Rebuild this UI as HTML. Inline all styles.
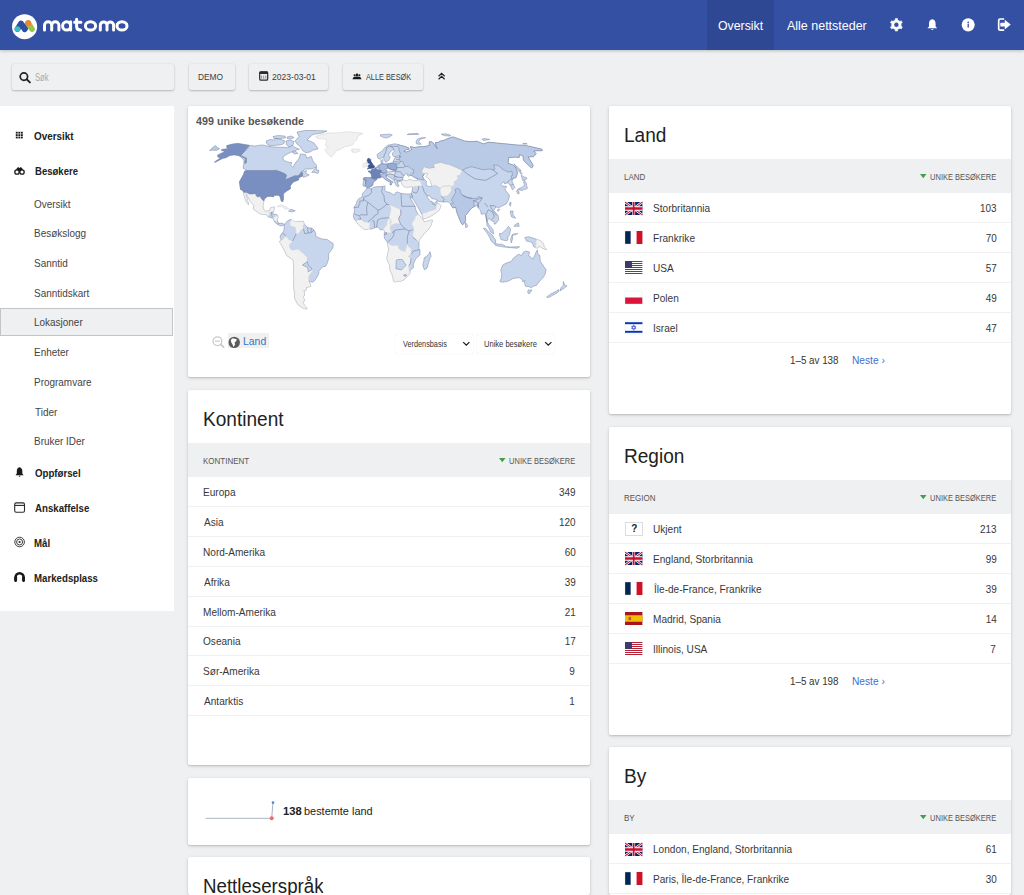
<!DOCTYPE html><html><head><meta charset="utf-8"><title>Matomo</title><style>
html{margin:0;padding:0;width:1024px;height:895px;overflow:hidden;}
body{margin:0;padding:0;}
body{width:1024px;height:895px;overflow:hidden;position:relative;background:#eff0f1;font-family:"Liberation Sans", sans-serif;}
.t{position:absolute;white-space:nowrap;}
.r{position:absolute;box-sizing:border-box;}
svg{position:absolute;overflow:visible;}
.card{position:absolute;background:#fff;border-radius:2px;box-shadow:0 1px 2px rgba(0,0,0,.16),0 1px 4px rgba(0,0,0,.10);}
.btn{position:absolute;background:#eff0f1;border-radius:2px;box-shadow:0 1px 2px rgba(0,0,0,.22),0 0 2px rgba(0,0,0,.08);}
</style></head><body>
<div class="r" style="left:0px;top:0px;width:1024px;height:50px;background:#3450a3;box-shadow:0 1px 3px rgba(0,0,0,.22);"></div>
<div class="r" style="left:707px;top:0px;width:67px;height:50px;background:#2f4893;"></div>
<div class="t" style="top:19.31px;font-size:13.1px;line-height:13.1px;color:#fff;transform:scaleX(0.940);left:717.92px;transform-origin:0 0;">Oversikt</div>
<div class="t" style="top:19.31px;font-size:13.1px;line-height:13.1px;color:#fff;transform:scaleX(0.953);left:786.98px;transform-origin:0 0;">Alle nettsteder</div>
<svg style="left:0;top:0" width="140" height="50">
<circle cx="24.6" cy="26.7" r="12.55" fill="#fff"/>
<path d="M17.5 29L21.1 23.4L24.7 29.3L28.2 23.3" fill="none" stroke="#2f4e9f" stroke-width="5.7" stroke-linecap="round" stroke-linejoin="round"/>
<path d="M28.2 23.3L31.9 29" fill="none" stroke="#95c748" stroke-width="5.8" stroke-linecap="round"/>
<circle cx="17.45" cy="29" r="2.85" fill="#35bfc0"/>
<circle cx="28.2" cy="23.25" r="2.9" fill="#f38334"/>
<g fill="none" stroke="#fff" stroke-width="3.0" stroke-linecap="round" stroke-linejoin="round">
<path d="M44.5 30.1V25.3A3.6 3.6 0 0 1 51.7 25.3V30.1M51.7 25.3A3.6 3.6 0 0 1 58.9 25.3V30.1"/>
<ellipse cx="66.6" cy="25.9" rx="4.0" ry="4.2"/><path d="M70.6 21.8V30.1"/>
<path d="M76.6 19.3V26.6Q76.6 30.1 80.6 30.1M74.6 22.2H80.9"/>
<ellipse cx="90.5" cy="25.9" rx="5.1" ry="4.2"/>
<path d="M100.3 30.1V25.3A3.35 3.35 0 0 1 107 25.3V30.1M107 25.3A3.3 3.3 0 0 1 113.6 25.3V30.1"/>
<ellipse cx="122" cy="25.9" rx="5.0" ry="4.2"/>
</g></svg>
<svg style="left:0;top:0" width="1024" height="50">
<path d="M895.31 20.02L895.27 18.60L897.53 18.60L897.49 20.02L899.99 21.46L901.20 20.72L902.33 22.68L901.08 23.36L901.08 26.24L902.33 26.92L901.20 28.88L899.99 28.14L897.49 29.58L897.53 31.00L895.27 31.00L895.31 29.58L892.81 28.14L891.60 28.88L890.47 26.92L891.72 26.24L891.72 23.36L890.47 22.68L891.60 20.72L892.81 21.46Z M896.4 22.3A2.5 2.5 0 1 0 896.4 27.3A2.5 2.5 0 1 0 896.4 22.3Z" fill="#fff" fill-rule="evenodd" stroke="#fff" stroke-width="0.6" stroke-linejoin="round"/>
<path d="M932.3 19.2C934.8 19.6 935.6 21.4 935.6 24.2V26.6L937.2 28.3H927.4L929 26.6V24.2C929 21.4 929.8 19.6 932.3 19.2Z" fill="#fff"/>
<path d="M931.2 28.9H933.4A1.1 1.1 0 0 1 931.2 28.9Z" fill="#fff"/>
<circle cx="968.2" cy="24.85" r="6.55" fill="#fff"/>
<circle cx="968.2" cy="22.3" r="0.85" fill="#3450a3"/>
<rect x="967.55" y="23.7" width="1.3" height="3.9" fill="#3450a3"/>
<path d="M1004.2 19H1000.2Q998.7 19 998.7 20.5V28.7Q998.7 30.2 1000.2 30.2H1004.2" fill="none" stroke="#fff" stroke-width="1.7"/>
<path d="M1000.6 23H1005V20.3L1010.4 24.6L1005 28.9V26.2H1000.6Z" fill="#fff" stroke="#fff" stroke-width="0.5" stroke-linejoin="round"/>
</svg>
<div class="btn" style="left:12px;top:64px;width:162px;height:26px;"></div>
<div class="btn" style="left:189px;top:64px;width:46px;height:26px;"></div>
<div class="btn" style="left:249px;top:64px;width:79px;height:26px;"></div>
<div class="btn" style="left:343px;top:64px;width:80px;height:26px;"></div>
<div class="t" style="top:72.93px;font-size:10px;line-height:10px;color:#aaa;transform:scaleX(0.767);left:35.35px;transform-origin:0 0;">Søk</div>
<div class="t" style="top:71.87px;font-size:9.6px;line-height:9.6px;color:#3c3c3c;transform:scaleX(0.871);left:198.11px;transform-origin:0 0;">DEMO</div>
<div class="t" style="top:71.97px;font-size:9.6px;line-height:9.6px;color:#3c3c3c;transform:scaleX(0.893);left:272.27px;transform-origin:0 0;">2023-03-01</div>
<div class="t" style="top:71.97px;font-size:9.6px;line-height:9.6px;color:#3c3c3c;transform:scaleX(0.761);left:365.99px;transform-origin:0 0;">ALLE BESØK</div>
<svg style="left:0;top:0" width="460" height="100">
<circle cx="23.9" cy="76.6" r="3.7" fill="none" stroke="#222" stroke-width="1.7"/>
<path d="M26.6 79.3L29.9 82.4" stroke="#222" stroke-width="1.9" stroke-linecap="round"/>
<rect x="259.7" y="71.9" width="8" height="8.3" rx="1.3" fill="none" stroke="#2b2b2b" stroke-width="1.2"/>
<rect x="259.3" y="71.5" width="8.8" height="2.6" rx="1" fill="#2b2b2b"/>
<path d="M261.6 75.6V78.8M263.7 75.6V78.8M265.8 75.6V78.8" stroke="#777" stroke-width="0.8"/>
<circle cx="354.6" cy="75.2" r="1.05" fill="#1a1a1a"/><circle cx="357" cy="74.9" r="1.3" fill="#1a1a1a"/><circle cx="359.4" cy="75.2" r="1.05" fill="#1a1a1a"/>
<path d="M352.5 79.3Q352.8 76.7 354.6 76.7Q356 76.7 357 76.6Q358 76.7 359.4 76.7Q361.2 76.7 361.5 79.3Z" fill="#1a1a1a"/>
<path d="M438.6 76.3L441.6 73.4L444.6 76.3M438.6 79.3L441.6 76.4L444.6 79.3" fill="none" stroke="#222" stroke-width="1.2"/>
</svg>
<div class="r" style="left:0px;top:106px;width:174px;height:505px;background:#fff;"></div>
<div class="r" style="left:0px;top:308px;width:173px;height:28px;background:#eff0f1;border:1px solid #c4c4c4;"></div>
<div class="t" style="top:130.80px;font-size:10.75px;line-height:10.75px;color:#212121;font-weight:700;transform:scaleX(0.919);left:34.49px;transform-origin:0 0;">Oversikt</div>
<div class="t" style="top:165.90px;font-size:10.75px;line-height:10.75px;color:#212121;font-weight:700;transform:scaleX(0.888);left:34.56px;transform-origin:0 0;">Besøkere</div>
<div class="t" style="top:199.56px;font-size:10.2px;line-height:10.2px;color:#444;transform:scaleX(0.977);left:34.43px;transform-origin:0 0;">Oversikt</div>
<div class="t" style="top:229.28px;font-size:10.2px;line-height:10.2px;color:#444;transform:scaleX(0.977);left:34.08px;transform-origin:0 0;">Besøkslogg</div>
<div class="t" style="top:259.00px;font-size:10.2px;line-height:10.2px;color:#444;transform:scaleX(0.977);left:34.45px;transform-origin:0 0;">Sanntid</div>
<div class="t" style="top:288.72px;font-size:10.2px;line-height:10.2px;color:#444;transform:scaleX(0.977);left:34.45px;transform-origin:0 0;">Sanntidskart</div>
<div class="t" style="top:318.44px;font-size:10.2px;line-height:10.2px;color:#444;transform:scaleX(0.977);left:34.08px;transform-origin:0 0;">Lokasjoner</div>
<div class="t" style="top:348.16px;font-size:10.2px;line-height:10.2px;color:#444;transform:scaleX(0.977);left:34.08px;transform-origin:0 0;">Enheter</div>
<div class="t" style="top:377.88px;font-size:10.2px;line-height:10.2px;color:#444;transform:scaleX(0.977);left:34.08px;transform-origin:0 0;">Programvare</div>
<div class="t" style="top:407.60px;font-size:10.2px;line-height:10.2px;color:#444;transform:scaleX(0.977);left:34.68px;transform-origin:0 0;">Tider</div>
<div class="t" style="top:437.32px;font-size:10.2px;line-height:10.2px;color:#444;transform:scaleX(0.977);left:34.08px;transform-origin:0 0;">Bruker IDer</div>
<div class="t" style="top:467.50px;font-size:10.75px;line-height:10.75px;color:#212121;font-weight:700;transform:scaleX(0.900);left:34.50px;transform-origin:0 0;">Oppførsel</div>
<div class="t" style="top:502.60px;font-size:10.75px;line-height:10.75px;color:#212121;font-weight:700;transform:scaleX(0.900);left:34.66px;transform-origin:0 0;">Anskaffelse</div>
<div class="t" style="top:537.70px;font-size:10.75px;line-height:10.75px;color:#212121;font-weight:700;transform:scaleX(0.900);left:34.25px;transform-origin:0 0;">Mål</div>
<div class="t" style="top:572.90px;font-size:10.75px;line-height:10.75px;color:#212121;font-weight:700;transform:scaleX(0.900);left:34.25px;transform-origin:0 0;">Markedsplass</div>
<svg style="left:0;top:100" width="180" height="500" viewBox="0 100 180 500">
<rect x="15.80" y="131.80" width="1.9" height="1.8" fill="#1a1a1a"/><rect x="15.80" y="134.20" width="1.9" height="1.8" fill="#1a1a1a"/><rect x="15.80" y="136.60" width="1.9" height="1.8" fill="#1a1a1a"/><rect x="18.35" y="131.80" width="1.9" height="1.8" fill="#1a1a1a"/><rect x="18.35" y="134.20" width="1.9" height="1.8" fill="#1a1a1a"/><rect x="18.35" y="136.60" width="1.9" height="1.8" fill="#1a1a1a"/><rect x="20.90" y="131.80" width="1.9" height="1.8" fill="#1a1a1a"/><rect x="20.90" y="134.20" width="1.9" height="1.8" fill="#1a1a1a"/><rect x="20.90" y="136.60" width="1.9" height="1.8" fill="#1a1a1a"/>
<path d="M15.2 171.5L17 168Q17.5 167.2 18.8 167.3L19.5 168.2L20.2 167.3Q21.5 167.2 22 168L23.8 171.5Z" fill="#1a1a1a"/>
<circle cx="17" cy="172" r="2.2" fill="#fff" stroke="#1a1a1a" stroke-width="1.3"/>
<circle cx="22" cy="172" r="2.2" fill="#fff" stroke="#1a1a1a" stroke-width="1.3"/>
<path d="M19.5 467.2C21.6 467.6 22.3 469.2 22.3 471.2V473.6L23.6 475.3H15.5L16.8 473.6V471.2C16.8 469.2 17.4 467.6 19.5 467.2Z" fill="#1a1a1a"/>
<path d="M18.6 475.8H20.5A0.95 0.95 0 0 1 18.6 475.8Z" fill="#1a1a1a"/>
<rect x="14.7" y="502.9" width="9.8" height="9.3" rx="1.5" fill="none" stroke="#2a2a2a" stroke-width="1.1"/>
<path d="M14.9 505.4H24.4" stroke="#2a2a2a" stroke-width="1.1"/>
<circle cx="19.6" cy="542" r="4.8" fill="none" stroke="#2a2a2a" stroke-width="0.9"/>
<circle cx="19.6" cy="542" r="3" fill="none" stroke="#2a2a2a" stroke-width="0.9"/>
<circle cx="19.6" cy="542" r="1.1" fill="#2a2a2a"/>
<path d="M15.6 580.7V577.2A4 4 0 0 1 23.6 577.2V580.7" fill="none" stroke="#1a1a1a" stroke-width="2.6" stroke-linecap="round"/>
<rect x="14.3" y="576.6" width="2.8" height="4.6" rx="1" fill="#1a1a1a"/><rect x="22.1" y="576.6" width="2.8" height="4.6" rx="1" fill="#1a1a1a"/>
</svg>
<div class="card" style="left:188px;top:106px;width:402px;height:271px;"></div>
<div class="t" style="top:115.69px;font-size:11px;line-height:11px;color:#555;font-weight:700;transform:scaleX(0.976);left:196.14px;transform-origin:0 0;">499 unike besøkende</div>
<svg style="left:0;top:0" width="1024" height="895"><defs><clipPath id="mc"><rect x="188" y="106" width="402" height="271"/></clipPath></defs><g clip-path="url(#mc)"><path d="M251.0 145.3L254.4 146.1L261.6 144.9L265.4 145.5L270.4 146.7L277.8 147.2L283.9 147.2L287.9 147.8L291.7 144.9L293.9 146.7L296.5 148.0L299.4 149.2L292.7 151.3L284.5 155.5L282.9 157.9L283.6 160.4L287.7 161.9L291.8 162.7L290.9 165.5L292.7 167.3L295.4 162.9L299.0 158.5L300.4 153.9L305.6 154.5L306.8 158.1L311.3 156.4L312.9 161.0L316.1 164.8L316.7 166.8L311.8 169.0L305.7 169.0L300.6 172.4L306.8 170.7L305.5 173.1L309.2 175.0L306.3 176.3L303.4 177.3L302.6 176.0L298.9 177.6L298.4 180.0L293.7 181.7L291.5 183.9L290.1 186.3L290.4 188.7L287.3 190.6L283.3 193.6L283.3 199.6L282.5 202.0L281.2 200.7L280.6 198.3L279.6 195.6L276.9 195.1L273.5 195.4L273.6 196.8L271.1 196.3L267.7 196.3L264.2 199.0L263.9 201.0L262.8 206.3L264.0 210.0L265.6 211.4L269.7 210.7L270.7 207.6L274.6 207.0L273.6 211.0L272.4 214.3L276.2 214.3L278.0 215.6L277.3 221.0L279.0 223.6L281.9 223.0L284.4 224.3L283.0 225.6L280.7 225.9L277.8 224.6L274.8 222.3L273.0 218.3L268.5 217.0L265.9 214.2L263.0 214.7L259.1 213.2L253.3 209.0L254.1 205.6L250.2 201.2L247.6 196.3L245.9 193.2L246.1 195.6L248.8 205.0L246.3 202.3L245.0 198.3L244.0 195.0L243.6 192.3L242.7 190.3L240.6 189.5L240.0 185.7L239.5 181.8L243.7 174.2L244.6 171.3L246.8 170.5L243.1 168.2L243.8 163.5L243.9 160.4L242.1 157.9L239.7 156.3ZM311.7 172.4L316.4 167.2L316.2 169.9L318.7 170.1L318.6 172.4L317.4 173.7L315.1 172.4ZM288.6 211.0L290.5 209.1L295.3 210.8L292.4 211.9L288.5 211.2ZM284.4 224.3L285.9 223.0L287.4 221.0L291.1 219.1L291.2 221.2L295.2 221.6L299.8 221.4L303.3 221.4L304.3 224.3L307.7 227.6L312.3 228.3L314.0 230.0L315.7 233.2L315.7 236.3L318.0 237.4L322.1 239.0L327.3 239.5L330.7 242.0L332.8 243.0L333.3 245.2L332.6 248.3L330.3 251.6L328.7 253.6L328.6 259.0L327.3 263.0L325.8 266.3L323.0 266.7L318.8 271.0L318.8 273.6L317.1 277.0L314.4 281.0L312.8 282.2L310.0 281.6L308.8 281.0L310.4 284.3L310.8 286.3L306.2 287.6L306.4 289.9L303.5 290.3L304.5 292.3L304.3 295.6L302.8 297.5L304.9 299.5L303.2 302.4L304.1 305.0L307.3 308.4L306.1 309.1L302.7 307.8L297.9 304.6L294.6 298.2L294.6 292.9L293.7 287.6L294.0 278.3L293.4 273.0L293.7 266.3L293.2 260.0L286.9 255.6L285.0 251.6L281.5 245.0L279.6 241.9L281.1 239.0L279.9 237.0L281.0 234.3L282.4 233.2L284.0 230.3L284.1 227.0ZM363.4 186.3L362.9 183.9L363.8 180.7L363.2 178.4L364.6 177.5L368.8 177.8L371.2 177.8L371.8 176.3L370.7 172.9L368.0 171.3L371.3 170.9L371.6 169.6L374.5 169.0L375.4 167.8L376.9 167.3L377.7 165.4L379.8 164.8L381.5 164.1L381.2 162.2L380.7 160.6L382.8 159.5L383.0 161.4L382.7 163.1L383.7 164.1L386.7 164.1L391.1 163.1L393.4 162.6L393.2 161.0L395.0 157.6L401.1 156.8L398.1 156.1L393.9 156.7L392.7 155.5L392.3 153.1L395.1 150.7L394.0 149.7L392.3 150.1L390.0 152.5L388.8 154.3L388.6 155.5L390.2 156.7L389.8 157.9L388.7 160.4L386.9 161.6L385.6 162.4L384.9 161.0L383.7 158.5L382.6 157.3L380.4 159.1L379.4 159.1L377.7 157.9L377.3 156.1L377.2 154.3L379.9 152.5L382.5 150.8L384.0 148.6L385.5 147.0L387.8 145.2L391.1 144.6L394.2 143.8L397.0 144.2L398.9 144.7L400.8 145.5L403.6 146.1L408.5 147.8L409.2 149.2L406.4 149.5L403.8 151.3L406.3 152.1L408.8 151.1L411.8 149.5L410.3 146.7L414.6 147.5L418.6 146.8L423.8 146.7L429.3 145.5L429.3 142.2L429.4 141.7L432.0 141.9L433.8 143.9L437.4 148.9L436.5 146.7L435.1 142.8L438.9 142.2L439.7 141.2L443.4 140.6L447.7 138.6L452.8 136.9L465.2 141.2L471.6 141.7L476.7 141.2L483.4 143.9L488.9 142.2L498.8 143.3L507.5 144.1L518.5 145.2L523.7 145.2L528.6 146.2L541.9 149.2L542.3 150.7L536.9 150.7L533.7 151.0L536.2 153.7L534.7 155.5L533.4 156.7L528.0 156.9L529.4 159.1L531.0 161.6L533.2 165.4L531.6 168.0L528.7 165.4L524.1 161.0L523.4 159.4L523.2 156.1L519.6 154.5L519.1 157.5L515.4 157.1L508.7 157.5L508.4 160.4L508.2 163.5L512.7 164.8L515.1 166.7L517.3 171.2L517.1 174.4L515.9 177.7L512.7 178.6L512.0 181.3L514.9 187.6L512.9 189.6L512.1 189.4L510.7 185.7L507.6 182.9L504.5 183.7L504.1 181.7L501.2 183.7L500.8 184.6L502.7 186.1L506.7 186.3L505.0 189.0L506.4 191.6L508.8 194.3L509.5 195.9L508.3 200.3L506.2 203.9L502.0 206.0L498.9 207.6L496.0 207.0L494.5 209.0L493.8 210.6L498.0 215.2L498.8 219.6L495.5 224.0L494.3 224.2L494.0 221.6L491.8 221.0L489.1 218.8L488.1 217.8L487.6 222.3L489.0 225.0L490.4 226.6L492.9 229.6L493.8 233.8L490.4 231.9L489.1 228.3L486.7 225.0L486.9 222.3L485.1 213.6L481.3 214.3L480.5 210.3L478.3 208.0L477.4 205.6L474.3 206.6L472.2 207.6L470.2 209.6L467.1 213.6L465.3 215.6L465.6 218.3L465.2 221.9L462.7 224.8L461.2 223.0L459.3 218.6L457.1 213.0L456.3 209.9L455.8 207.2L452.9 207.9L451.6 205.8L450.5 204.2L448.3 201.8L442.8 202.0L437.9 201.2L436.4 199.4L431.6 198.6L429.7 195.9L426.9 195.6L427.6 197.6L429.6 200.3L431.4 201.9L431.4 201.0L434.4 203.4L436.8 200.6L437.2 203.2L439.5 204.2L441.1 205.6L439.2 210.3L436.2 212.6L433.1 214.8L429.0 217.0L425.1 218.6L423.2 218.8L422.4 215.6L418.9 209.0L417.6 206.6L415.1 202.3L412.5 198.3L412.3 196.3L411.3 193.9L411.9 191.6L412.5 189.0L412.7 186.8L410.8 186.6L408.2 187.2L406.5 187.0L404.0 186.7L402.8 185.3L401.5 183.0L401.6 181.7L401.2 181.3L398.9 181.3L398.4 182.3L397.4 181.7L398.1 185.0L399.2 185.0L397.8 187.1L396.1 185.3L394.9 183.0L393.8 180.0L390.0 177.7L387.5 175.9L385.9 175.2L386.3 177.1L388.0 179.0L390.2 180.4L393.0 182.2L391.5 183.7L391.1 185.0L390.2 185.0L390.4 182.3L388.1 181.0L386.2 180.1L384.2 178.4L382.0 176.5L380.5 177.6L378.4 178.0L376.3 178.4L376.5 179.8L373.7 181.7L372.8 183.0L373.2 184.1L372.4 185.5L370.8 186.7L367.1 187.6L366.2 186.6L365.0 186.1ZM366.8 187.9L371.0 188.8L374.3 187.0L378.6 186.6L382.6 186.5L384.1 185.9L385.2 186.2L384.7 187.6L385.3 188.7L384.5 190.3L386.0 191.5L387.6 191.9L390.2 192.7L394.5 195.2L395.5 192.7L397.6 191.9L401.0 193.4L406.5 194.0L409.2 193.9L411.3 193.9L412.3 196.3L411.8 198.3L410.2 196.3L409.7 195.8L411.0 199.6L413.5 203.6L415.6 207.6L415.7 209.5L418.0 214.3L421.0 217.2L423.1 219.8L424.0 221.8L426.3 221.5L429.7 220.6L432.3 219.9L432.1 221.8L430.5 226.3L428.2 229.6L424.2 233.6L421.9 236.7L419.8 239.0L418.8 241.9L419.0 245.0L418.9 249.0L420.0 250.3L419.9 255.0L415.6 259.0L413.3 264.3L413.5 267.6L410.3 270.2L409.7 273.6L407.9 275.6L404.2 279.6L401.4 281.0L397.5 281.2L395.2 282.0L393.5 281.2L393.2 278.3L391.8 273.6L390.2 271.0L389.8 265.6L386.9 258.7L387.7 253.6L388.8 249.6L387.3 242.3L384.4 238.3L384.2 234.3L384.6 230.6L383.2 229.6L380.4 229.9L378.0 227.1L375.7 227.4L371.1 229.2L368.8 228.7L364.8 229.8L361.3 227.0L358.1 224.3L356.2 221.2L354.1 219.0L353.4 216.0L354.6 209.6L353.9 207.6L356.4 203.6L357.0 201.0L358.7 198.7L362.1 197.0L362.4 193.6L364.9 190.8L366.1 189.6ZM430.0 251.6L431.2 256.3L429.9 258.3L427.0 268.3L424.3 269.8L422.7 265.0L423.8 261.0L424.3 257.6L427.2 255.9L429.0 253.6ZM465.5 222.6L467.8 225.6L466.8 227.6L465.7 227.4L465.3 225.0ZM537.3 249.9L537.9 254.3L539.9 255.6L540.1 261.0L542.5 264.3L544.0 267.0L546.1 269.6L545.3 273.8L543.2 277.6L540.4 280.3L536.4 285.4L533.3 286.2L531.3 287.8L529.2 286.7L525.6 286.3L524.4 283.1L525.0 280.3L522.7 282.0L522.5 279.6L518.8 277.6L512.9 278.6L509.3 280.8L502.8 282.3L499.8 281.4L501.3 278.3L501.7 274.3L500.8 270.3L502.7 265.0L506.1 263.1L511.1 261.6L513.3 258.3L516.6 255.6L518.7 254.2L521.7 255.6L523.2 252.3L525.7 251.0L529.6 252.0L528.6 255.6L533.2 259.1L536.0 252.3ZM528.2 289.9L532.0 290.1L529.9 293.2L528.3 293.7L527.7 291.9ZM563.3 281.5L564.1 283.6L564.6 285.0L567.1 285.9L564.1 288.3L560.1 290.9L560.8 287.9L563.4 285.0L563.2 282.3ZM558.6 289.6L559.1 291.2L556.1 293.6L553.2 294.9L548.8 297.6L546.6 297.1L550.3 294.2L556.1 291.3ZM524.7 237.6L528.2 236.7L532.2 237.8L536.2 239.1L540.2 240.7L543.5 243.6L543.9 246.3L546.5 249.6L542.6 248.3L539.3 246.0L538.0 247.9L535.7 247.8L533.5 246.4L532.4 242.8L529.2 241.5L526.3 241.0L525.8 239.4ZM499.3 233.6L500.2 237.2L501.0 239.6L505.6 240.7L507.7 240.3L508.0 237.0L509.7 234.3L510.7 229.0L508.3 226.3L506.7 229.0L503.9 231.4L501.6 233.5ZM483.3 228.2L485.9 228.7L489.5 233.0L493.0 235.6L494.1 238.3L495.8 239.9L495.4 243.4L493.9 243.5L491.1 241.0L489.5 237.0L487.2 233.2ZM494.7 244.7L495.7 243.5L498.5 244.3L501.4 244.2L503.3 244.8L505.3 246.0L505.3 247.2L501.3 246.6L497.8 246.0L495.6 245.5ZM511.3 243.0L512.5 239.1L512.5 235.0L515.5 234.8L517.8 233.6L513.7 233.9L512.0 235.0L511.2 237.0L510.6 239.6ZM505.9 246.7L510.5 247.0L515.1 246.8L519.7 246.7L517.3 248.3L510.4 247.6L507.0 247.6ZM510.2 211.0L513.1 211.1L512.9 214.3L515.7 218.3L511.6 217.0L510.7 214.3ZM514.0 226.3L519.2 226.3L518.4 223.0L515.6 224.3ZM510.4 201.9L511.1 203.0L510.3 206.3L509.2 204.3ZM497.1 210.0L499.1 208.8L499.7 209.5L498.3 211.4ZM517.3 189.9L519.0 188.3L522.0 187.6L523.0 186.3L524.4 184.7L523.5 181.7L524.4 180.5L526.3 183.0L526.8 186.3L527.5 188.3L526.4 189.0L523.9 189.6L522.1 190.6L519.7 190.0ZM516.5 191.0L517.8 190.4L519.2 191.9L518.9 194.0L517.6 193.6ZM522.7 180.4L521.2 175.2L523.7 176.7L527.1 178.0L525.8 179.7ZM521.2 174.4L522.1 173.4L519.7 170.5L521.2 170.5L515.7 165.4L513.9 163.7L516.7 168.0ZM380.4 136.1L383.8 137.6L386.3 138.1L389.2 137.1L392.3 135.1L390.5 134.2L385.3 134.4L380.2 134.8ZM416.4 143.9L419.2 144.3L421.3 144.2L418.6 141.7L420.3 139.1L425.6 137.8L425.4 137.6L419.5 138.1L417.0 139.6L416.1 141.7ZM407.2 134.6L418.9 134.4L417.3 133.4L408.8 133.8ZM444.3 135.6L450.2 136.1L450.5 135.1L445.7 133.8L441.1 134.2ZM483.4 140.6L489.8 139.4L484.4 138.6L482.0 139.1ZM522.8 143.3L526.3 143.6L527.3 144.0L524.3 144.0Z" fill="#c7d6ed" stroke="#6c7999" stroke-width="0.45" stroke-linejoin="round"/><path d="M266 141L270 139.5L274 140L276 138.5L281 139.5L285 141L283.5 144L279 145L273 145.5L270 146L267 144ZM273 136.5L278 135.5L285 136L285.5 138L280 138.5L274 138.5ZM286 141L290 140L294 141.5L293 145L289 147L286.5 145ZM297 132L305 130.5L315 130.5L327 131L322 133L313 134.5L310 137L307 140L310 141L314 143L317 147L318 149L313 150L310 152L306 152.7L303 151L301 148L300 146L297 144L295 141L297 139L299 136.5ZM292 152L296 151.5L298 153.5L294.5 154ZM287 137L291 136L294 137.5L291 139L287.5 138.8Z" fill="#c7d6ed" stroke="#6c7999" stroke-width="0.45" stroke-linejoin="round"/><path d="M404.2 180.7L406.6 180.9L408.8 179.7L410.6 179.7L413.8 181.0L417.5 180.4L417.3 178.9L415.2 177.7L413.0 176.4L411.4 175.3L410.2 175.3L408.9 176.5L407.3 175.2L408.0 174.4L405.8 173.7L404.6 174.7L404.1 175.7L403.2 176.7L402.7 178.5L403.0 180.2ZM409.7 175.1L411.4 175.3L412.7 173.7L413.6 172.9L411.9 173.1L410.0 173.8ZM424.0 173.7L426.4 173.1L428.1 173.5L426.8 175.3L426.0 176.4L429.1 179.0L430.5 181.4L431.7 185.0L431.9 185.9L429.4 186.7L426.4 185.5L426.2 182.3L426.8 181.7L424.3 179.7L423.5 178.4L422.4 176.0L424.0 175.1Z" fill="#ffffff" stroke="#6c7999" stroke-width="0.45" stroke-linejoin="round"/><path d="M397.3 146.2L398.9 144.7L400.8 145.5L403.6 146.1L408.5 147.8L409.2 149.2L406.4 149.5L403.8 151.3L406.3 152.1L408.8 151.1L411.8 149.5L410.3 146.7L414.6 147.5L418.6 146.8L423.8 146.7L429.3 145.5L429.3 142.2L429.4 141.7L432.0 141.9L433.8 143.9L437.4 148.9L436.5 146.7L435.1 142.8L438.9 142.2L439.7 141.2L443.4 140.6L447.7 138.6L452.8 136.9L465.2 141.2L471.6 141.7L476.7 141.2L483.4 143.9L488.9 142.2L498.8 143.3L507.5 144.1L518.5 145.2L523.7 145.2L528.6 146.2L541.9 149.2L542.3 150.7L536.9 150.7L533.7 151.0L536.2 153.7L534.7 155.5L533.4 156.7L528.0 156.9L529.4 159.1L531.0 161.6L533.2 165.4L531.6 168.0L528.7 165.4L524.1 161.0L523.4 159.4L523.2 156.1L519.6 154.5L519.1 157.5L515.4 157.1L508.7 157.5L508.4 160.4L508.2 163.5L512.7 164.8L515.1 166.7L517.3 171.2L517.1 174.4L515.9 177.7L512.7 178.6L512.0 179.2L511.0 175.9L512.5 175.5L511.9 171.2L508.4 172.2L503.1 169.5L498.2 165.4L493.5 165.0L495.0 169.2L492.1 169.5L489.0 168.9L483.4 169.9L471.5 166.7L466.3 168.3L463.0 169.9L462.1 170.3L457.0 168.0L449.5 164.8L445.7 164.1L440.7 162.4L437.0 163.4L433.6 164.1L434.6 167.7L428.8 168.5L424.1 167.1L422.7 169.2L421.5 172.1L424.0 173.7L424.0 175.1L422.4 176.0L423.5 178.4L424.3 179.7L422.7 179.8L419.3 179.0L415.2 177.7L413.0 176.4L411.4 175.3L412.7 173.7L413.6 172.9L413.8 169.8L411.6 169.0L408.5 166.4L404.8 166.6L402.9 161.6L400.1 161.4L399.6 160.0L399.5 157.4L401.1 156.8L399.0 156.1L400.1 154.9L400.2 153.1L399.2 150.9L398.8 147.8Z" fill="#b9cae6" stroke="#6c7999" stroke-width="0.45" stroke-linejoin="round"/><path d="M450.5 204.2L451.6 205.8L452.9 207.9L455.8 207.2L456.3 209.9L457.1 213.0L459.3 218.6L461.2 223.0L462.7 224.8L465.2 221.9L465.6 218.3L465.3 215.6L467.1 213.6L470.2 209.6L472.2 207.6L474.3 206.6L473.6 201.0L476.7 199.9L479.9 198.6L482.3 198.0L478.9 196.6L476.5 198.4L472.0 198.4L467.3 197.5L463.1 195.6L461.0 193.6L460.0 189.9L457.6 188.3L455.1 189.2L455.7 192.3L453.5 195.9L452.3 198.3L451.5 200.3L453.6 203.0Z" fill="#b6c8e6" stroke="#6c7999" stroke-width="0.45" stroke-linejoin="round"/><path d="M315.6 136.6L318.0 138.6L325.6 139.1L326.9 141.2L325.3 145.5L327.9 146.7L325.1 149.5L326.6 153.1L330.2 156.3L331.7 156.9L333.4 154.9L336.4 150.7L339.3 149.9L344.4 147.0L352.6 144.9L354.0 141.7L357.2 139.6L357.3 136.6L363.1 133.4L353.9 132.3L346.9 131.8L337.0 132.9L328.2 133.0L321.7 134.6ZM276.9 206.6L281.1 204.7L285.4 206.6L289.0 208.7L285.2 209.2L282.0 206.6L277.5 206.7ZM352.0 152.0L355.6 152.6L359.4 151.4L360.3 150.4L359.1 149.2L356.4 149.3L352.4 149.1L350.9 150.1L352.6 150.9ZM366.9 166.4L366.8 165.0L367.4 163.5L366.9 162.6L365.4 162.5L364.4 163.5L362.9 163.9L363.1 165.4L362.5 166.8L363.3 167.3L364.8 166.9L366.4 166.6ZM385.3 168.9L388.1 168.0L392.2 169.9L396.3 170.3L395.6 171.3L394.9 174.2L394.2 174.4L389.7 173.8L387.1 173.8L383.4 172.7L386.4 172.5L387.1 170.8Z" fill="#f1f1f1" stroke="#cfcfcf" stroke-width="0.5" stroke-linejoin="round"/><path d="M243.6 192.3L246.2 192.3L249.9 193.9L253.0 193.9L255.1 193.2L256.6 196.2L258.1 197.0L260.0 195.9L261.6 199.0L263.9 201.0L262.8 206.3L264.0 210.0L265.6 211.4L269.7 210.7L270.7 207.6L274.6 207.0L273.6 211.0L271.6 211.9L268.9 212.6L269.9 214.3L267.7 216.3L265.9 214.2L263.0 214.7L259.1 213.2L253.3 209.0L254.1 205.6L250.2 201.2L247.6 196.3L245.9 193.2L246.1 195.6L248.8 205.0L246.3 202.3L245.0 198.3L244.0 195.0ZM278.0 215.6L277.3 221.0L274.9 221.0L273.0 218.3L274.8 217.0L276.0 215.6ZM291.5 219.9L295.2 221.6L299.8 221.4L303.3 221.4L304.3 224.3L302.8 225.6L303.4 228.7L300.7 230.4L298.6 233.6L296.1 234.0L295.8 231.0L295.3 227.4L292.2 226.3L290.1 225.9L290.0 222.6L289.4 223.4L290.4 220.7ZM280.8 240.2L282.8 239.6L286.2 235.8L288.6 239.6L292.7 241.0L289.3 245.0L290.0 248.3L292.4 250.3L298.1 249.0L303.4 253.6L307.1 257.0L307.3 261.6L302.5 265.0L307.8 267.6L311.9 269.6L312.9 270.7L311.1 273.0L308.9 275.9L308.7 280.3L308.8 281.0L310.4 284.3L310.8 286.3L306.2 287.6L306.4 289.9L303.5 290.3L304.5 292.3L304.3 295.6L302.8 297.5L304.9 299.5L303.2 302.4L304.1 305.0L307.3 308.4L306.1 309.1L302.7 307.8L297.9 304.6L294.6 298.2L294.6 292.9L293.7 287.6L294.0 278.3L293.4 273.0L293.7 266.3L293.2 260.0L286.9 255.6L285.0 251.6L281.5 245.0L279.6 241.9Z" fill="#f1f1f1" stroke="#cfcfcf" stroke-width="0.5" stroke-linejoin="round"/><path d="M389.2 204.6L400.7 209.6L400.9 214.7L399.2 217.0L398.7 219.0L400.5 224.0L395.3 223.6L391.3 225.6L389.5 223.0L391.5 222.3L390.1 219.6L388.9 217.6L389.7 215.0L391.0 208.3ZM383.2 229.6L384.6 230.6L384.7 232.7L391.9 233.0L390.7 230.3L390.1 227.2L391.3 225.6L389.5 223.0L391.5 222.3L390.1 219.6L388.9 217.6L387.2 221.0L386.1 226.3L384.4 227.2ZM415.2 216.6L418.0 214.3L421.0 217.2L423.1 219.8L424.0 221.8L426.3 221.5L429.7 220.6L432.3 219.9L432.1 221.8L430.5 226.3L428.2 229.6L424.2 233.6L421.9 236.7L419.8 239.0L418.8 241.9L416.7 240.3L412.7 237.0L412.7 234.3L413.8 229.6L412.6 225.6L411.4 224.3L412.8 221.6L414.7 219.0ZM387.3 242.3L388.8 249.6L387.7 253.6L386.9 258.7L389.8 265.6L390.2 271.0L391.8 273.6L393.2 278.3L393.5 281.2L395.2 282.0L397.5 281.2L401.4 281.0L404.2 279.6L407.9 275.6L409.7 273.6L410.3 270.2L409.3 271.4L408.8 265.5L410.3 263.6L411.1 258.3L408.2 256.4L411.2 254.3L411.1 248.2L408.6 246.7L407.4 243.6L405.0 251.6L401.0 250.3L398.7 248.3L398.2 245.0L392.4 245.6L388.4 243.4ZM358.1 224.3L361.3 227.0L364.8 229.8L368.8 228.7L370.0 229.0L369.7 226.3L370.3 223.0L367.7 221.9L364.2 221.9L360.8 219.2L357.7 219.2L356.2 221.2Z" fill="#f1f1f1" stroke="#cfcfcf" stroke-width="0.5" stroke-linejoin="round"/><path d="M421.5 172.1L422.7 169.2L424.1 167.1L428.8 168.5L434.6 167.7L433.6 164.1L437.0 163.4L440.7 162.4L445.7 164.1L449.5 164.8L457.0 168.0L462.1 170.3L461.2 173.1L459.4 175.2L457.0 175.7L458.0 178.6L453.9 182.3L454.5 185.7L451.1 186.5L449.3 185.7L446.9 186.1L443.4 186.1L440.3 188.2L439.2 187.0L435.0 185.0L431.9 185.9L431.7 185.0L430.5 181.4L429.1 179.0L426.0 176.4L426.8 175.3L428.1 173.5L426.4 173.1L424.0 173.7ZM440.3 188.2L440.0 191.0L441.2 195.9L442.6 196.4L447.5 195.8L450.1 193.1L451.5 190.3L451.4 187.0L454.5 185.7L451.1 186.5L449.3 185.7L446.9 186.1L443.4 186.1ZM401.2 181.3L401.6 181.7L401.5 183.0L402.8 185.3L404.0 186.7L406.5 187.0L408.2 187.2L410.8 186.6L412.7 186.8L413.1 187.4L414.6 186.6L418.9 186.1L422.0 186.1L421.0 183.1L421.4 182.7L419.7 180.9L417.5 180.4L413.8 181.0L410.6 179.7L408.8 179.7L406.6 180.9L404.2 180.7L403.0 180.2L401.4 180.0ZM423.2 218.8L425.1 218.6L429.0 217.0L433.1 214.8L436.2 212.6L439.2 210.3L441.1 205.6L439.5 204.2L437.2 203.2L436.2 205.4L436.0 209.0L432.6 210.3L429.2 211.0L426.5 212.6L422.7 213.0L422.4 215.6ZM536.2 239.1L540.2 240.7L543.5 243.6L543.9 246.3L546.5 249.6L542.6 248.3L539.3 246.0L538.0 247.9L535.7 247.8Z" fill="#f1f1f1" stroke="#cfcfcf" stroke-width="0.5" stroke-linejoin="round"/><path d="M302.5 265.0L307.3 261.6L308.2 265.2L311.2 267.6L311.9 269.6L308.2 272.0L307.8 267.6ZM396.0 265.0L395.9 268.7L401.5 269.9L402.7 268.6L406.2 265.2L404.6 263.0L402.3 259.4L400.2 259.5L397.3 259.6L396.2 260.3ZM403.5 275.0L406.2 274.3L406.2 276.0L404.5 276.4Z" fill="#c7d6ed" stroke="#6c7999" stroke-width="0.45" stroke-linejoin="round"/><path d="M246.8 170.5L275.3 170.5L275.5 170.0L280.5 171.8L285.1 173.8L286.6 175.3L285.2 179.7L289.4 178.0L292.4 176.8L294.6 175.7L298.0 175.7L300.2 173.8L301.3 172.6L302.7 173.0L302.6 176.0L298.9 177.6L298.4 180.0L293.7 181.7L291.5 183.9L290.1 186.3L290.4 188.7L287.3 190.6L283.3 193.6L283.3 199.6L282.5 202.0L281.2 200.7L280.6 198.3L279.6 195.6L276.9 195.1L273.5 195.4L273.6 196.8L271.1 196.3L267.7 196.3L264.2 199.0L263.9 201.0L261.6 199.0L260.0 195.9L258.1 197.0L256.6 196.2L255.1 193.2L253.0 193.9L249.9 193.9L246.2 192.3L243.6 192.3L242.7 190.3L240.6 189.5L240.0 185.7L239.5 181.8L243.7 174.2L244.6 171.3Z" fill="#7a8fc1" stroke="#6c7999" stroke-width="0.45" stroke-linejoin="round"/><path d="M249.8 145.3L237.8 143.3L232 144.1L226.7 145.6L226.4 147.3L228.4 148.5L221.4 149.4L221.4 150.6L225 151.4L217.6 155L217.6 156.7L220.2 157.9L214.4 162L215 162.6L222.6 158.5L225.5 157.9L230.2 155.5L234.3 154.9L240.1 156.1L245.4 158.5L244.6 163.3L246.3 163L246.6 158.2L240.7 155.5Z" fill="#7a8fc1" stroke="#6c7999" stroke-width="0.45" stroke-linejoin="round"/><path d="M209.5 150.6L213.5 146.8L215.5 145.6L217.5 147.6L219.6 148.8L217 150.2L212 150.2Z" fill="#b9cae6" stroke="#6c7999" stroke-width="0.45" stroke-linejoin="round"/><path d="M363.2 178.4L364.6 177.5L368.8 177.8L371.2 177.8L373.1 178.8L376.5 179.2L376.5 179.8L373.7 181.7L372.8 183.0L373.2 184.1L372.4 185.5L370.8 186.7L367.1 187.6L366.2 186.6L365.0 186.1L365.3 184.3L365.6 183.0L365.9 179.8L363.7 179.7Z" fill="#9bafd7" stroke="#6c7999" stroke-width="0.45" stroke-linejoin="round"/><path d="M378.9 166.9L379.8 164.8L381.5 164.1L381.3 162.9L383.7 164.1L386.7 164.1L387.6 166.0L388.1 168.0L385.3 168.9L387.1 170.8L386.4 172.5L383.4 172.7L380.7 172.4L381.4 170.5L379.4 169.9L379.0 168.2Z" fill="#a7b9de" stroke="#6c7999" stroke-width="0.45" stroke-linejoin="round"/><path d="M386.7 164.1L391.1 163.1L396.1 163.7L396.7 165.8L397.3 168.2L396.3 170.3L392.4 170.1L388.1 168.0L387.6 166.0Z" fill="#95aad5" stroke="#6c7999" stroke-width="0.45" stroke-linejoin="round"/><path d="M381.0 177.3L382.0 176.5L384.2 178.4L386.2 180.1L388.1 181.0L390.4 182.3L390.2 185.0L391.1 185.0L391.5 183.7L393.0 182.2L390.2 180.4L388.0 179.0L386.3 177.1L385.9 175.2L387.4 174.7L386.0 173.5L383.4 173.8L380.3 174.6Z" fill="#b3c4e4" stroke="#6c7999" stroke-width="0.45" stroke-linejoin="round"/><path d="M371.2 177.8L371.8 176.3L370.7 172.9L368.0 171.3L371.3 170.9L371.6 169.6L374.5 169.0L375.4 167.8L377.2 169.4L378.9 169.9L381.4 170.5L380.7 172.4L379.3 174.0L380.4 175.3L381.0 177.3L380.5 177.6L378.4 178.0L376.3 178.4L376.5 179.2L373.1 178.8Z" fill="#6b83b9" stroke="#6c7999" stroke-width="0.45" stroke-linejoin="round"/><path d="M367.1 169.1L369.9 168.5L372.9 168.2L374.3 167.7L374.6 166.0L373.0 164.9L372.5 163.5L371.2 162.1L370.7 160.2L371.0 159.6L368.9 159.6L369.8 158.4L367.9 158.4L367.1 160.4L367.4 161.6L367.9 162.6L368.0 163.2L369.5 163.0L369.7 164.1L369.9 164.9L368.2 165.0L368.7 166.3L367.7 166.9L369.9 167.4L368.6 167.8Z" fill="#3b5897" stroke="#2b3f70" stroke-width="0.45" stroke-linejoin="round"/><path d="M371.4 189.0L371.6 192.3L369.3 195.0L363.6 197.4L363.5 199.2M353.9 207.6L358.6 207.2L358.6 205.0L359.8 204.3L359.8 201.0L363.5 201.0L363.5 199.2M363.5 199.2L367.9 202.3L374.7 207.6L377.9 210.0L380.0 209.6L386.9 204.3L389.2 204.6M354.5 213.9L359.4 216.0L360.4 214.8L367.1 215.0L366.6 207.6L367.9 202.3M377.9 210.0L378.2 213.6L374.5 215.6L374.0 217.0L370.0 220.3L367.7 221.9M386.9 204.3L386.3 203.0L384.6 201.9L383.9 195.6L381.5 191.6L382.3 189.6L382.2 186.5M401.0 193.4L401.7 206.3L415.2 206.3M400.7 209.6L400.9 214.7L399.2 217.0L398.7 219.0L400.5 224.0L405.2 229.0L409.2 231.0L412.7 229.6M377.6 220.0L381.4 218.3L387.4 217.9L388.9 217.6M376.5 227.2L377.6 220.0M357.7 219.2L360.8 219.2L359.7 216.3M372.3 221.0L374.0 221.0L374.6 227.4M391.9 233.0L394.8 230.3L398.8 229.6L405.2 229.0M387.3 242.3L391.9 238.3L393.7 235.6L394.2 231.0M407.4 243.6L407.3 237.2L408.1 234.3L409.2 231.0M416.7 240.3L412.7 237.0M420.0 249.6L413.6 251.0L411.2 254.3M411.1 258.3L410.3 263.6L408.8 265.5M384.7 232.7L386.5 232.7L386.5 234.3L384.2 234.3M383.7 157.9L384.3 154.9L385.8 151.9L386.5 147.8L388.5 146.7L390.1 146.1M394.0 149.7L393.1 147.8L390.1 146.1L393.2 146.3L397.3 146.2M393.3 161.6L398.8 162.0M396.1 159.4L399.3 159.8M396.1 164.1L398.6 164.1L400.3 161.6M396.7 167.3L403.7 167.6L404.8 166.6M396.2 171.7L400.4 171.6L402.6 175.1L404.1 175.3M388.1 168.0L392.2 169.9L396.3 170.3M390.5 171.8L395.6 171.3M386.4 172.5L390.5 171.8M395.6 171.3L394.9 174.2L394.2 174.4M387.2 175.1L389.7 173.8L392.9 174.6L397.3 177.1M396.8 177.1L403.2 177.5M397.2 180.7L401.2 180.1L402.9 179.7M393.8 180.0L395.4 179.0L397.2 180.7M393.7 178.4L394.6 176.4L396.8 177.1M379.3 174.0L380.7 172.4L382.8 172.5L383.9 173.8M376.3 167.4L378.9 166.9M365.3 184.3L365.6 183.0L365.9 179.8L363.7 179.7M426.9 195.6L424.1 191.6L423.0 187.9L422.0 186.1M418.9 186.1L418.3 189.6L416.5 193.0M412.6 191.6L414.0 192.6L416.5 193.0M442.8 202.0L444.1 199.4L441.2 195.9M462.9 170.3L468.0 174.4L475.0 178.8L485.3 180.4L490.9 177.5L493.4 176.0L497.7 173.5L492.1 169.5M478.3 208.0L478.0 204.3L479.5 202.3L482.3 198.0M484.6 203.0L488.0 207.0M486.8 222.3L486.1 214.3L488.4 209.6L492.7 212.3L494.3 216.7M490.1 205.6L493.2 211.6L496.5 215.6M491.6 219.9L494.3 216.7M490.1 205.6L494.1 205.6L496.0 207.0M507.0 182.5L510.8 179.2L512.0 179.2M510.6 185.3L512.9 184.3M436.2 205.4L431.7 203.4M462.4 195.0L467.3 197.5L472.0 198.4M472.9 200.3L477.8 202.3L478.1 207.0M271.6 211.9L271.3 214.4L272.3 217.0M278.1 224.6L278.4 222.8M282.4 233.2L286.2 235.8M296.1 234.0L292.7 241.0M303.4 228.7L304.7 233.6L308.8 233.0L311.1 232.7L314.0 230.0M307.5 227.6L308.2 233.0M311.2 228.0L311.1 232.7" fill="none" stroke="#6c7999" stroke-width="0.55" stroke-linejoin="round"/></g></svg>
<div class="r" style="left:228px;top:333px;width:41px;height:15px;background:#f0f0f0;"></div>
<svg style="left:0;top:0" width="600" height="400">
<circle cx="217.4" cy="341.2" r="4.4" fill="none" stroke="#c8c8c8" stroke-width="1.3"/>
<path d="M215 341.2H219.8" stroke="#c8c8c8" stroke-width="1.2"/>
<path d="M220.6 344.4L223.6 347.2" stroke="#c8c8c8" stroke-width="1.7" stroke-linecap="round"/>
<circle cx="234.2" cy="342.4" r="5.7" fill="#5c5c5c"/>
<path d="M232 338.6Q234.5 338 236.8 339.4L236.2 341.3L234.6 342.2L235.1 344.6L233.3 346.9L232.6 344.4L231.2 342.3L230.8 340.2Z" fill="#fff"/>
<path d="M463.2 342.1L466.3 345.2L469.4 342.1M545.2 342.1L548.3 345.2L551.4 342.1" fill="none" stroke="#222" stroke-width="1.3"/>
</svg>
<div class="t" style="top:335.76px;font-size:10.8px;line-height:10.8px;color:#3a72c9;transform:scaleX(0.967);left:242.64px;transform-origin:0 0;">Land</div>
<div class="r" style="left:395.7px;top:333.7px;width:77.6px;height:19.9px;border-radius:2px;box-shadow:0 0 1px rgba(0,0,0,.18);"></div>
<div class="r" style="left:477.4px;top:333.7px;width:77.1px;height:19.9px;border-radius:2px;box-shadow:0 0 1px rgba(0,0,0,.18);"></div>
<div class="t" style="top:340.43px;font-size:8.7px;line-height:8.7px;color:#333;transform:scaleX(0.840);left:402.97px;transform-origin:0 0;">Verdensbasis</div>
<div class="t" style="top:340.43px;font-size:8.7px;line-height:8.7px;color:#333;transform:scaleX(0.869);left:484.42px;transform-origin:0 0;">Unike besøkere</div>
<div class="card" style="left:188px;top:390px;width:402px;height:375px;"></div>
<div class="t" style="top:408.64px;font-size:20.5px;line-height:20.5px;color:#212121;transform:scaleX(0.930);left:203.44px;transform-origin:0 0;">Kontinent</div>
<div class="r" style="left:188px;top:443px;width:402px;height:34px;background:#eff0f1;"></div>
<div class="t" style="top:456.53px;font-size:9.3px;line-height:9.3px;color:#555;transform:scaleX(0.860);left:203.14px;transform-origin:0 0;">KONTINENT</div>
<div class="t" style="top:456.53px;font-size:9.3px;line-height:9.3px;color:#555;transform:scaleX(0.804);right:448.82px;transform-origin:100% 0;">UNIKE BESØKERE</div>
<svg style="left:498.75px;top:458.2px" width="7" height="5"><path d="M0 0H6.5L3.25 4.2Z" fill="#43a047"/></svg>
<div class="r" style="left:188px;top:506.06px;width:402px;height:1.0px;background:#f1f1f1;"></div>
<div class="t" style="top:487.11px;font-size:10.5px;line-height:10.5px;color:#383838;transform:scaleX(0.960);left:202.97px;transform-origin:0 0;">Europa</div>
<div class="t" style="top:487.11px;font-size:10.5px;line-height:10.5px;color:#383838;transform:scaleX(0.945);right:448.73px;transform-origin:100% 0;">349</div>
<div class="r" style="left:188px;top:535.9200000000001px;width:402px;height:1.0px;background:#f1f1f1;"></div>
<div class="t" style="top:516.97px;font-size:10.5px;line-height:10.5px;color:#383838;transform:scaleX(0.960);left:203.78px;transform-origin:0 0;">Asia</div>
<div class="t" style="top:516.97px;font-size:10.5px;line-height:10.5px;color:#383838;transform:scaleX(0.945);right:448.73px;transform-origin:100% 0;">120</div>
<div class="r" style="left:188px;top:565.7800000000001px;width:402px;height:1.0px;background:#f1f1f1;"></div>
<div class="t" style="top:546.83px;font-size:10.5px;line-height:10.5px;color:#383838;transform:scaleX(0.960);left:202.97px;transform-origin:0 0;">Nord-Amerika</div>
<div class="t" style="top:546.83px;font-size:10.5px;line-height:10.5px;color:#383838;transform:scaleX(0.945);right:448.73px;transform-origin:100% 0;">60</div>
<div class="r" style="left:188px;top:595.6400000000001px;width:402px;height:1.0px;background:#f1f1f1;"></div>
<div class="t" style="top:576.69px;font-size:10.5px;line-height:10.5px;color:#383838;transform:scaleX(0.960);left:203.78px;transform-origin:0 0;">Afrika</div>
<div class="t" style="top:576.69px;font-size:10.5px;line-height:10.5px;color:#383838;transform:scaleX(0.945);right:448.73px;transform-origin:100% 0;">39</div>
<div class="r" style="left:188px;top:625.5000000000001px;width:402px;height:1.0px;background:#f1f1f1;"></div>
<div class="t" style="top:606.55px;font-size:10.5px;line-height:10.5px;color:#383838;transform:scaleX(0.960);left:202.97px;transform-origin:0 0;">Mellom-Amerika</div>
<div class="t" style="top:606.55px;font-size:10.5px;line-height:10.5px;color:#383838;transform:scaleX(0.945);right:448.73px;transform-origin:100% 0;">21</div>
<div class="r" style="left:188px;top:655.36px;width:402px;height:1.0px;background:#f1f1f1;"></div>
<div class="t" style="top:636.41px;font-size:10.5px;line-height:10.5px;color:#383838;transform:scaleX(0.960);left:203.32px;transform-origin:0 0;">Oseania</div>
<div class="t" style="top:636.41px;font-size:10.5px;line-height:10.5px;color:#383838;transform:scaleX(0.945);right:448.73px;transform-origin:100% 0;">17</div>
<div class="r" style="left:188px;top:685.22px;width:402px;height:1.0px;background:#f1f1f1;"></div>
<div class="t" style="top:666.27px;font-size:10.5px;line-height:10.5px;color:#383838;transform:scaleX(0.960);left:203.34px;transform-origin:0 0;">Sør-Amerika</div>
<div class="t" style="top:666.27px;font-size:10.5px;line-height:10.5px;color:#383838;transform:scaleX(0.945);right:448.73px;transform-origin:100% 0;">9</div>
<div class="r" style="left:188px;top:715.08px;width:402px;height:1.0px;background:#f1f1f1;"></div>
<div class="t" style="top:696.13px;font-size:10.5px;line-height:10.5px;color:#383838;transform:scaleX(0.960);left:203.78px;transform-origin:0 0;">Antarktis</div>
<div class="t" style="top:696.13px;font-size:10.5px;line-height:10.5px;color:#383838;transform:scaleX(0.945);right:448.73px;transform-origin:100% 0;">1</div>
<div class="card" style="left:188px;top:778px;width:402px;height:67px;"></div>
<svg style="left:0;top:0" width="1024" height="895"><path d="M205.6 818.3H271.7L273 802" fill="none" stroke="#a9b4c4" stroke-width="1"/><circle cx="271.7" cy="818.3" r="2" fill="#f26a6a"/><circle cx="273" cy="802.6" r="1.3" fill="#3d8be0"/></svg>
<div class="t" style="top:805.89px;font-size:11px;line-height:11px;color:#212121;font-weight:700;transform:scaleX(1.016);left:282.70px;transform-origin:0 0;">138</div>
<div class="t" style="top:805.89px;font-size:11px;line-height:11px;color:#212121;transform:scaleX(0.993);left:304.40px;transform-origin:0 0;">bestemte land</div>
<div class="card" style="left:188px;top:857px;width:402px;height:38px;"></div>
<div class="t" style="top:875.64px;font-size:20.5px;line-height:20.5px;color:#212121;transform:scaleX(0.912);left:202.97px;transform-origin:0 0;height:19px;overflow:hidden;">Nettleserspråk</div>
<div class="card" style="left:609px;top:106px;width:402px;height:308px;"></div>
<div class="t" style="top:124.64px;font-size:20.5px;line-height:20.5px;color:#212121;transform:scaleX(0.930);left:624.44px;transform-origin:0 0;">Land</div>
<div class="r" style="left:609px;top:159px;width:402px;height:34px;background:#eff0f1;"></div>
<div class="t" style="top:172.53px;font-size:9.3px;line-height:9.3px;color:#555;transform:scaleX(0.860);left:624.14px;transform-origin:0 0;">LAND</div>
<div class="t" style="top:172.53px;font-size:9.3px;line-height:9.3px;color:#555;transform:scaleX(0.804);right:27.82px;transform-origin:100% 0;">UNIKE BESØKERE</div>
<svg style="left:919.75px;top:174.2px" width="7" height="5"><path d="M0 0H6.5L3.25 4.2Z" fill="#43a047"/></svg>
<div class="r" style="left:609px;top:222.06px;width:402px;height:1.0px;background:#f1f1f1;"></div>
<svg style="left:625.0px;top:201.6px" width="17.4" height="13" viewBox="0 0 60 30" preserveAspectRatio="none"><rect width="60" height="30" fill="#012169"/><path d="M0,0 L60,30 M60,0 L0,30" stroke="#fff" stroke-width="6"/><path d="M0,0 L60,30 M60,0 L0,30" stroke="#C8102E" stroke-width="2.5"/><path d="M30,0 V30 M0,15 H60" stroke="#fff" stroke-width="10"/><path d="M30,0 V30 M0,15 H60" stroke="#C8102E" stroke-width="6"/></svg>
<div class="t" style="top:203.11px;font-size:10.5px;line-height:10.5px;color:#383838;transform:scaleX(0.960);left:653.04px;transform-origin:0 0;">Storbritannia</div>
<div class="t" style="top:203.11px;font-size:10.5px;line-height:10.5px;color:#383838;transform:scaleX(0.945);right:27.73px;transform-origin:100% 0;">103</div>
<div class="r" style="left:609px;top:251.92000000000002px;width:402px;height:1.0px;background:#f1f1f1;"></div>
<svg style="left:625.0px;top:231.46px" width="17.4" height="13" viewBox="0 0 3 2" preserveAspectRatio="none"><rect width="1" height="2" fill="#002654"/><rect x="1" width="1" height="2" fill="#fff"/><rect x="0" y="0" width="3" height="2" fill="none" stroke="#e3e3e3" stroke-width="0.06"/><rect x="2" width="1" height="2" fill="#CE1126"/></svg>
<div class="t" style="top:232.97px;font-size:10.5px;line-height:10.5px;color:#383838;transform:scaleX(0.960);left:652.67px;transform-origin:0 0;">Frankrike</div>
<div class="t" style="top:232.97px;font-size:10.5px;line-height:10.5px;color:#383838;transform:scaleX(0.945);right:27.73px;transform-origin:100% 0;">70</div>
<div class="r" style="left:609px;top:281.78px;width:402px;height:1.0px;background:#f1f1f1;"></div>
<svg style="left:625.0px;top:261.32px" width="17.4" height="13" viewBox="0 0 19 13" preserveAspectRatio="none"><rect width="19" height="13" fill="#fff"/><rect y="0" width="19" height="1" fill="#B22234"/><rect y="2" width="19" height="1" fill="#B22234"/><rect y="4" width="19" height="1" fill="#B22234"/><rect y="6" width="19" height="1" fill="#B22234"/><rect y="8" width="19" height="1" fill="#B22234"/><rect y="10" width="19" height="1" fill="#B22234"/><rect y="12" width="19" height="1" fill="#B22234"/><rect width="7.6" height="7" fill="#3C3B6E"/></svg>
<div class="t" style="top:262.83px;font-size:10.5px;line-height:10.5px;color:#383838;transform:scaleX(0.960);left:652.72px;transform-origin:0 0;">USA</div>
<div class="t" style="top:262.83px;font-size:10.5px;line-height:10.5px;color:#383838;transform:scaleX(0.945);right:27.73px;transform-origin:100% 0;">57</div>
<div class="r" style="left:609px;top:311.64px;width:402px;height:1.0px;background:#f1f1f1;"></div>
<svg style="left:625.0px;top:291.18px" width="17.4" height="13" viewBox="0 0 8 5" preserveAspectRatio="none"><rect width="8" height="2.5" fill="#fff"/><rect y="2.5" width="8" height="2.5" fill="#DC143C"/><rect x="0" y="0" width="8" height="5" fill="none" stroke="#e5e5e5" stroke-width="0.15"/></svg>
<div class="t" style="top:292.69px;font-size:10.5px;line-height:10.5px;color:#383838;transform:scaleX(0.960);left:652.67px;transform-origin:0 0;">Polen</div>
<div class="t" style="top:292.69px;font-size:10.5px;line-height:10.5px;color:#383838;transform:scaleX(0.945);right:27.73px;transform-origin:100% 0;">49</div>
<div class="r" style="left:609px;top:341.5px;width:402px;height:1.0px;background:#f1f1f1;"></div>
<svg style="left:625.0px;top:321.04px" width="17.4" height="13" viewBox="0 0 22 16" preserveAspectRatio="none"><rect width="22" height="16" fill="#fff" stroke="#e0e0e0" stroke-width="0.4"/><rect y="1.5" width="22" height="2.4" fill="#0038b8"/><rect y="12.1" width="22" height="2.4" fill="#0038b8"/><path d="M11 4.6L13.6 9.4H8.4Z M11 11.4L8.4 6.6H13.6Z" fill="none" stroke="#3344cc" stroke-width="0.8"/></svg>
<div class="t" style="top:322.55px;font-size:10.5px;line-height:10.5px;color:#383838;transform:scaleX(0.960);left:652.57px;transform-origin:0 0;">Israel</div>
<div class="t" style="top:322.55px;font-size:10.5px;line-height:10.5px;color:#383838;transform:scaleX(0.945);right:27.73px;transform-origin:100% 0;">47</div>
<div class="t" style="top:354.91px;font-size:10.5px;line-height:10.5px;color:#333;transform:scaleX(0.933);left:790.25px;transform-origin:0 0;">1–5 av 138</div>
<div class="t" style="top:354.91px;font-size:10.5px;line-height:10.5px;color:#3f6fd1;transform:scaleX(0.968);left:851.67px;transform-origin:0 0;">Neste ›</div>
<div class="card" style="left:609px;top:427px;width:402px;height:308px;"></div>
<div class="t" style="top:445.64px;font-size:20.5px;line-height:20.5px;color:#212121;transform:scaleX(0.930);left:624.44px;transform-origin:0 0;">Region</div>
<div class="r" style="left:609px;top:480px;width:402px;height:34px;background:#eff0f1;"></div>
<div class="t" style="top:493.53px;font-size:9.3px;line-height:9.3px;color:#555;transform:scaleX(0.860);left:624.14px;transform-origin:0 0;">REGION</div>
<div class="t" style="top:493.53px;font-size:9.3px;line-height:9.3px;color:#555;transform:scaleX(0.804);right:27.82px;transform-origin:100% 0;">UNIKE BESØKERE</div>
<svg style="left:919.75px;top:495.2px" width="7" height="5"><path d="M0 0H6.5L3.25 4.2Z" fill="#43a047"/></svg>
<div class="r" style="left:609px;top:543.0600000000001px;width:402px;height:1.0px;background:#f1f1f1;"></div>
<div class="r" style="left:624.8px;top:522.0px;width:17.8px;height:13.7px;background:#fff;border:1px solid #ddd;"></div>
<div class="t" style="left:631.2px;top:523.9px;font-size:10px;line-height:10px;font-weight:700;color:#222;">?</div>
<div class="t" style="top:524.11px;font-size:10.5px;line-height:10.5px;color:#383838;transform:scaleX(0.960);left:652.72px;transform-origin:0 0;">Ukjent</div>
<div class="t" style="top:524.11px;font-size:10.5px;line-height:10.5px;color:#383838;transform:scaleX(0.945);right:27.73px;transform-origin:100% 0;">213</div>
<div class="r" style="left:609px;top:572.9200000000001px;width:402px;height:1.0px;background:#f1f1f1;"></div>
<svg style="left:625.0px;top:552.46px" width="17.4" height="13" viewBox="0 0 60 30" preserveAspectRatio="none"><rect width="60" height="30" fill="#012169"/><path d="M0,0 L60,30 M60,0 L0,30" stroke="#fff" stroke-width="6"/><path d="M0,0 L60,30 M60,0 L0,30" stroke="#C8102E" stroke-width="2.5"/><path d="M30,0 V30 M0,15 H60" stroke="#fff" stroke-width="10"/><path d="M30,0 V30 M0,15 H60" stroke="#C8102E" stroke-width="6"/></svg>
<div class="t" style="top:553.97px;font-size:10.5px;line-height:10.5px;color:#383838;transform:scaleX(0.960);left:652.67px;transform-origin:0 0;">England, Storbritannia</div>
<div class="t" style="top:553.97px;font-size:10.5px;line-height:10.5px;color:#383838;transform:scaleX(0.945);right:27.73px;transform-origin:100% 0;">99</div>
<div class="r" style="left:609px;top:602.7800000000001px;width:402px;height:1.0px;background:#f1f1f1;"></div>
<svg style="left:625.0px;top:582.32px" width="17.4" height="13" viewBox="0 0 3 2" preserveAspectRatio="none"><rect width="1" height="2" fill="#002654"/><rect x="1" width="1" height="2" fill="#fff"/><rect x="0" y="0" width="3" height="2" fill="none" stroke="#e3e3e3" stroke-width="0.06"/><rect x="2" width="1" height="2" fill="#CE1126"/></svg>
<div class="t" style="top:583.83px;font-size:10.5px;line-height:10.5px;color:#383838;transform:scaleX(0.960);left:653.73px;transform-origin:0 0;">Île-de-France, Frankrike</div>
<div class="t" style="top:583.83px;font-size:10.5px;line-height:10.5px;color:#383838;transform:scaleX(0.945);right:27.73px;transform-origin:100% 0;">39</div>
<div class="r" style="left:609px;top:632.6400000000001px;width:402px;height:1.0px;background:#f1f1f1;"></div>
<svg style="left:625.0px;top:612.1800000000001px" width="17.4" height="13" viewBox="0 0 4 4" preserveAspectRatio="none"><rect width="4" height="4" fill="#AA151B"/><rect y="1" width="4" height="2" fill="#F1BF00"/><rect x="0.8" y="1.5" width="0.6" height="1" fill="#c0504d"/></svg>
<div class="t" style="top:613.69px;font-size:10.5px;line-height:10.5px;color:#383838;transform:scaleX(0.960);left:652.67px;transform-origin:0 0;">Madrid, Spania</div>
<div class="t" style="top:613.69px;font-size:10.5px;line-height:10.5px;color:#383838;transform:scaleX(0.945);right:27.73px;transform-origin:100% 0;">14</div>
<div class="r" style="left:609px;top:662.5000000000001px;width:402px;height:1.0px;background:#f1f1f1;"></div>
<svg style="left:625.0px;top:642.0400000000001px" width="17.4" height="13" viewBox="0 0 19 13" preserveAspectRatio="none"><rect width="19" height="13" fill="#fff"/><rect y="0" width="19" height="1" fill="#B22234"/><rect y="2" width="19" height="1" fill="#B22234"/><rect y="4" width="19" height="1" fill="#B22234"/><rect y="6" width="19" height="1" fill="#B22234"/><rect y="8" width="19" height="1" fill="#B22234"/><rect y="10" width="19" height="1" fill="#B22234"/><rect y="12" width="19" height="1" fill="#B22234"/><rect width="7.6" height="7" fill="#3C3B6E"/></svg>
<div class="t" style="top:643.55px;font-size:10.5px;line-height:10.5px;color:#383838;transform:scaleX(0.960);left:652.57px;transform-origin:0 0;">Illinois, USA</div>
<div class="t" style="top:643.55px;font-size:10.5px;line-height:10.5px;color:#383838;transform:scaleX(0.945);right:27.73px;transform-origin:100% 0;">7</div>
<div class="t" style="top:675.91px;font-size:10.5px;line-height:10.5px;color:#333;transform:scaleX(0.933);left:790.25px;transform-origin:0 0;">1–5 av 198</div>
<div class="t" style="top:675.91px;font-size:10.5px;line-height:10.5px;color:#3f6fd1;transform:scaleX(0.968);left:851.67px;transform-origin:0 0;">Neste ›</div>
<div class="card" style="left:609px;top:747px;width:402px;height:148px;"></div>
<div class="t" style="top:765.64px;font-size:20.5px;line-height:20.5px;color:#212121;transform:scaleX(0.930);left:624.44px;transform-origin:0 0;">By</div>
<div class="r" style="left:609px;top:800px;width:402px;height:34px;background:#eff0f1;"></div>
<div class="t" style="top:813.53px;font-size:9.3px;line-height:9.3px;color:#555;transform:scaleX(0.860);left:624.14px;transform-origin:0 0;">BY</div>
<div class="t" style="top:813.53px;font-size:9.3px;line-height:9.3px;color:#555;transform:scaleX(0.804);right:27.82px;transform-origin:100% 0;">UNIKE BESØKERE</div>
<svg style="left:919.75px;top:815.2px" width="7" height="5"><path d="M0 0H6.5L3.25 4.2Z" fill="#43a047"/></svg>
<div class="r" style="left:609px;top:863.0600000000001px;width:402px;height:1.0px;background:#f1f1f1;"></div>
<svg style="left:625.0px;top:842.6px" width="17.4" height="13" viewBox="0 0 60 30" preserveAspectRatio="none"><rect width="60" height="30" fill="#012169"/><path d="M0,0 L60,30 M60,0 L0,30" stroke="#fff" stroke-width="6"/><path d="M0,0 L60,30 M60,0 L0,30" stroke="#C8102E" stroke-width="2.5"/><path d="M30,0 V30 M0,15 H60" stroke="#fff" stroke-width="10"/><path d="M30,0 V30 M0,15 H60" stroke="#C8102E" stroke-width="6"/></svg>
<div class="t" style="top:844.11px;font-size:10.5px;line-height:10.5px;color:#383838;transform:scaleX(0.960);left:652.67px;transform-origin:0 0;">London, England, Storbritannia</div>
<div class="t" style="top:844.11px;font-size:10.5px;line-height:10.5px;color:#383838;transform:scaleX(0.945);right:27.73px;transform-origin:100% 0;">61</div>
<div class="r" style="left:609px;top:892.9200000000001px;width:402px;height:1.0px;background:#f1f1f1;"></div>
<svg style="left:625.0px;top:872.46px" width="17.4" height="13" viewBox="0 0 3 2" preserveAspectRatio="none"><rect width="1" height="2" fill="#002654"/><rect x="1" width="1" height="2" fill="#fff"/><rect x="0" y="0" width="3" height="2" fill="none" stroke="#e3e3e3" stroke-width="0.06"/><rect x="2" width="1" height="2" fill="#CE1126"/></svg>
<div class="t" style="top:873.97px;font-size:10.5px;line-height:10.5px;color:#383838;transform:scaleX(0.960);left:652.67px;transform-origin:0 0;">Paris, Île-de-France, Frankrike</div>
<div class="t" style="top:873.97px;font-size:10.5px;line-height:10.5px;color:#383838;transform:scaleX(0.945);right:27.73px;transform-origin:100% 0;">30</div>
</body></html>
